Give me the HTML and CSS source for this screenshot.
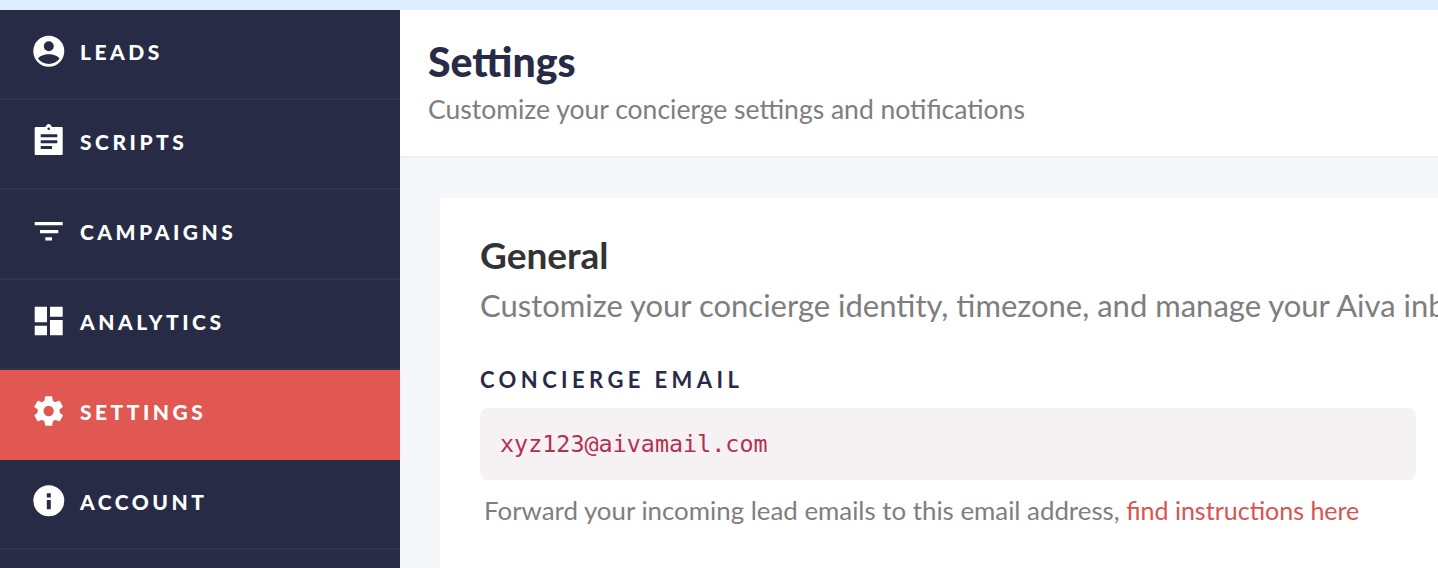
FILE: index.html
```html
<!DOCTYPE html>
<html lang="en">
<head>
  <meta charset="UTF-8" />
  <title>Settings</title>
  <link rel="stylesheet" href="styles.css">
</head>
<body>
  <div class="top-strip"></div>
  <div class="app">
    <nav class="sidebar">
      <a class="nav-item">
        <svg class="nav-icon" viewBox="0 0 32 32"><path fill-rule="evenodd" d="M16.800 .7a15.500 15.500 0 1 1 0 31a15.500 15.500 0 1 1 0-31zM16.800 6.200a5 5 0 1 0 0 10a5 5 0 1 0 0-10zM16.800 19.200c-4.600 0-9.200 1.700-10.800 4.400c2.400 3.300 6.400 5.400 10.800 5.400s8.400-2.100 10.800-5.400C26 20.900 21.400 19.200 16.800 19.200z"/></svg>
        <span>LEADS</span>
      </a>
      <a class="nav-item">
        <svg class="nav-icon" viewBox="0 0 32 32"><path fill-rule="evenodd" d="M4 2h9.500C14 .4 15.200-1 16.700-1s2.700 1.400 3.200 3H29.700c.6 0 1 .4 1 1v26c0 .6-.4 1-1 1H3.700c-.6 0-1-.4-1-1V3c0-.6.6-1 1.300-1zM16.700 2.400a1.300 1.300 0 1 0 0 2.600a1.300 1.300 0 1 0 0-2.600zM8.700 9.300v3h16.600v-3zM8.700 15.300v3h16.600v-3zM8.700 21v3H20v-3z"/></svg>
        <span>SCRIPTS</span>
      </a>
      <a class="nav-item">
        <svg class="nav-icon" viewBox="0 0 32 32"><path d="M2.700 7h28v3.300h-28zM8 15h18.300v3.300H8zM13.300 22.300H20v3.300h-6.700z"/></svg>
        <span>CAMPAIGNS</span>
      </a>
      <a class="nav-item">
        <svg class="nav-icon" viewBox="0 0 32 32"><path d="M2.700 1.700H15v15.600H2.700zM2.700 20.700H15v9.600H2.700zM18 1.700h12.700v10H18zM18 15h12.700v15.300H18z"/></svg>
        <span>ANALYTICS</span>
      </a>
      <a class="nav-item active">
        <svg class="nav-icon" viewBox="0 0 24 24"><path fill-rule="evenodd" d="M19.400 13c.04-.33.060-.66.060-1s-.020-.67-.060-1l2.100-1.650c.19-.15.240-.42.120-.64l-2-3.460c-.12-.22-.39-.3-.61-.22l-2.490 1c-.52-.4-1.080-.73-1.690-.98l-.38-2.650A.49.490 0 0 0 14 2h-4a.49.490 0 0 0-.49.420l-.38 2.650c-.61.25-1.170.59-1.690.98l-2.490-1c-.23-.090-.49 0-.61.220l-2 3.460c-.13.220-.07.490.12.640L4.570 11c-.04.330-.07.670-.07 1s.030.670.070 1l-2.110 1.650c-.19.150-.24.420-.12.640l2 3.460c.12.220.39.300.61.220l2.490-1c.52.400 1.080.730 1.690.980l.38 2.650c.03.240.24.420.49.420h4c.25 0 .46-.18.49-.42l.38-2.650c.61-.25 1.170-.59 1.690-.98l2.490 1c.23.090.49 0 .61-.22l2-3.460c.12-.22.070-.49-.12-.64L19.400 13zM12 8.500a3.500 3.500 0 1 1 0 7a3.500 3.500 0 1 1 0-7z" transform="translate(-.7 -1.200) scale(1.100)"/></svg>
        <span>SETTINGS</span>
      </a>
      <a class="nav-item">
        <svg class="nav-icon" viewBox="0 0 32 32"><path fill-rule="evenodd" d="M16.800 .3a15.500 15.500 0 1 1 0 31a15.500 15.500 0 1 1 0-31zM14.800 8.300v4.200h4V8.300zM14.800 15v9.300h4V15z"/></svg>
        <span>ACCOUNT</span>
      </a>
    </nav>

    <main class="content">
      <header class="page-header">
        <h1>Settings</h1>
        <p>Customize your concierge settings and notifications</p>
      </header>
      <div class="page-body">
        <section class="card">
          <h2>General</h2>
          <p class="card-sub">Customize your concierge identity, timezone, and manage your Aiva inbox</p>
          <label class="field-label">CONCIERGE EMAIL</label>
          <div class="code-box"><code>xyz123@aivamail.com</code></div>
          <p class="hint">Forward your incoming lead emails to this email address, <a>find instructions here</a></p>
        </section>
      </div>
    </main>
  </div>
</body>
</html>
```

FILE: styles.css
```css
html, body {
  height: 100%;
}

body {
  margin: 0;
  overflow: hidden;
  font-family: "Lato", sans-serif;
  background: #f6f7fb;
}

.top-strip {
  height: 10px;
  background: #ddecfe;
}

.app {
  display: flex;
  height: 558px;
  overflow: hidden;
}

/* sidebar */
.sidebar {
  width: 400px;
  flex-shrink: 0;
  background: #272b46;
}

.nav-item {
  display: flex;
  align-items: center;
  gap: 16px;
  box-sizing: border-box;
  height: 90px;
  padding: 0 0 6px 32px;
  border-bottom: 2px solid #2f334d;
  color: #fff;
  font-size: 21px;
  font-weight: 900;
  letter-spacing: 3.500px;
}

.nav-item.active {
  background: #e05851;
  border-bottom-color: #e05851;
}

.nav-icon {
  width: 32px;
  height: 32px;
  fill: #fff;
  flex-shrink: 0;
  overflow: visible;
}

/* main */
.content {
  flex: 1;
  min-width: 0;
}

.page-header {
  height: 146px;
  padding-left: 28px;
  background: #fff;
  border-bottom: 2px solid #eeeff2;
  overflow: hidden;
}

h1 {
  margin: 30px 0 0;
  color: #272b46;
  font-size: 41px;
  line-height: 44px;
  font-weight: 900;
}

.page-header p {
  margin: 9px 0 0;
  color: #7e7e7e;
  font-size: 26.500px;
  line-height: 32px;
}

.page-body {
  padding: 40px 0 0 40px;
}

.card {
  width: 936px;
  height: 400px;
  padding: 36px 40px 0;
  background: #fff;
}

h2 {
  margin: 0;
  color: #333;
  font-size: 37px;
  line-height: 42px;
  font-weight: 700;
}

.card-sub {
  margin: 9px 0 0;
  color: #7e7e7e;
  font-size: 31px;
  line-height: 40px;
  white-space: nowrap;
}

.field-label {
  display: block;
  margin-top: 42px;
  color: #272b46;
  font-size: 22px;
  line-height: 26px;
  font-weight: 700;
  letter-spacing: 4.400px;
}

.code-box {
  margin-top: 15px;
  height: 72px;
  padding: 0 20px;
  display: flex;
  align-items: center;
  background: #f6f1f3;
  border-radius: 8px;
}

code {
  color: #b4304f;
  font-family: "DejaVu Sans Mono", monospace;
  font-size: 23.400px;
}

.hint {
  margin: 14px 0 0 4px;
  color: #7e7e7e;
  font-size: 25.850px;
  line-height: 32px;
}

.hint a {
  color: #d9534f;
  font-size: 25px;
}
```
